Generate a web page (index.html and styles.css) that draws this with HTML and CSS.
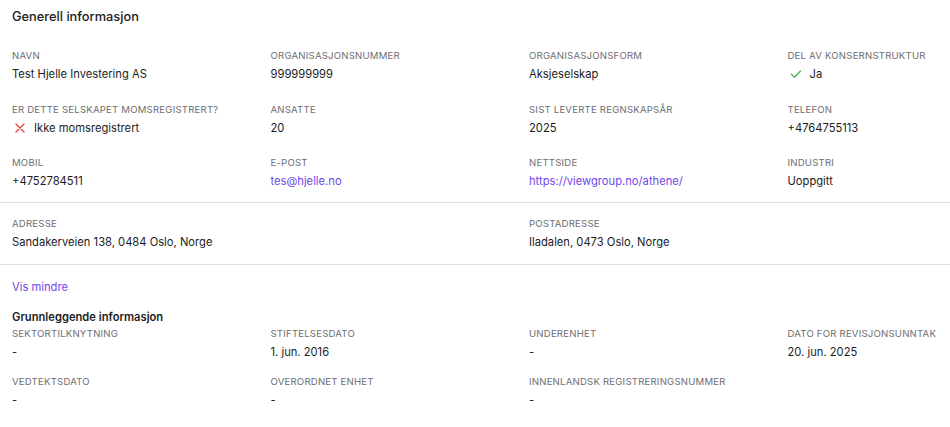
FILE: index.html
```html
<!DOCTYPE html>
<html lang="no">
<head>
<meta charset="utf-8">
<title>Generell informasjon</title>
<link rel="stylesheet" href="styles.css">
</head>
<body>
<div class="page">
  <h2 class="title">Generell informasjon</h2>

  <section class="grid grid-main">
    <div class="field"><div class="label">Navn</div><div class="value">Test Hjelle Investering AS</div></div>
    <div class="field"><div class="label">Organisasjonsnummer</div><div class="value">999999999</div></div>
    <div class="field"><div class="label">Organisasjonsform</div><div class="value">Aksjeselskap</div></div>
    <div class="field"><div class="label">Del av konsernstruktur</div><div class="value icon-value">
      <svg class="icon" viewBox="0 0 12 12" width="12" height="12"><path d="M1.5 6.3 L4.5 9.2 L10.5 3" fill="none" stroke="#4caf50" stroke-width="1.3" stroke-linecap="round" stroke-linejoin="round"/></svg>Ja</div></div>

    <div class="field"><div class="label">Er dette selskapet momsregistrert?</div><div class="value icon-value">
      <svg class="icon" viewBox="0 0 12 12" width="12" height="12"><path d="M2 2 L10 10 M10 2 L2 10" fill="none" stroke="#e5483c" stroke-width="1.4" stroke-linecap="round"/></svg>Ikke momsregistrert</div></div>
    <div class="field"><div class="label">Ansatte</div><div class="value">20</div></div>
    <div class="field"><div class="label">Sist leverte regnskapsår</div><div class="value">2025</div></div>
    <div class="field"><div class="label">Telefon</div><div class="value">+4764755113</div></div>

    <div class="field"><div class="label">Mobil</div><div class="value">+4752784511</div></div>
    <div class="field"><div class="label">E-post</div><div class="value"><a class="link" href="#">tes@hjelle.no</a></div></div>
    <div class="field"><div class="label">Nettside</div><div class="value"><a class="link" href="#">https://viewgroup.no/athene/</a></div></div>
    <div class="field"><div class="label">Industri</div><div class="value">Uoppgitt</div></div>
  </section>

  <section class="grid grid-address">
    <div class="field wide"><div class="label">Adresse</div><div class="value">Sandakerveien 138, 0484 Oslo, Norge</div></div>
    <div class="field wide"><div class="label">Postadresse</div><div class="value">Iladalen, 0473 Oslo, Norge</div></div>
  </section>

  <div class="more"><a class="link" href="#">Vis mindre</a></div>

  <h3 class="subtitle">Grunnleggende informasjon</h3>
  <section class="grid grid-basic">
    <div class="field"><div class="label">Sektortilknytning</div><div class="value">-</div></div>
    <div class="field"><div class="label">Stiftelsesdato</div><div class="value">1. jun. 2016</div></div>
    <div class="field"><div class="label">Underenhet</div><div class="value">-</div></div>
    <div class="field"><div class="label">Dato for revisjonsunntak</div><div class="value">20. jun. 2025</div></div>

    <div class="field"><div class="label">Vedtektsdato</div><div class="value">-</div></div>
    <div class="field"><div class="label">Overordnet enhet</div><div class="value">-</div></div>
    <div class="field"><div class="label">Innenlandsk registreringsnummer</div><div class="value">-</div></div>
  </section>
</div>
</body>
</html>
```

FILE: styles.css
```css
html, body {
  margin: 0;
  padding: 0;
  background: #ffffff;
  overflow: hidden;
}

body {
  font-family: Inter, "Noto Sans", sans-serif;
  color: #1c1c1e;
}

.page {
  width: 1100px;
  padding-top: 7px;
}

.title {
  margin: 0 0 22px 12px;
  font-size: 12.8px;
  line-height: 20px;
  font-weight: 500;
  color: #1c1c1e;
}

.grid {
  display: grid;
  grid-template-columns: repeat(4, 258.5px);
  padding-left: 12px;
}

.grid-main {
  row-gap: 20.5px;
  padding-bottom: 13px;
  border-bottom: 1px solid #dedede;
}

.grid-address {
  padding-top: 14px;
  padding-bottom: 14px;
  border-bottom: 1px solid #dedede;
}

.wide {
  grid-column: span 2;
}

.grid-basic {
  row-gap: 15px;
}

.field {
  display: flex;
  flex-direction: column;
  gap: 3px;
}

.label {
  font-size: 9.6px;
  line-height: 14px;
  text-transform: uppercase;
  letter-spacing: 0.2px;
  color: #6e6e73;
  white-space: nowrap;
}

.value {
  font-size: 11.2px;
  line-height: 16px;
  color: #1c1c1e;
  white-space: nowrap;
}

.icon-value {
  display: flex;
  align-items: center;
  gap: 8px;
}

.icon {
  margin-left: 2px;
  flex: none;
}

.link {
  color: #7048e8;
  text-decoration: none;
}

.more {
  padding: 14px 0 0 12px;
  font-size: 11.2px;
  line-height: 16px;
}

.subtitle {
  margin: 14px 0 2px 12px;
  font-size: 11.2px;
  line-height: 16px;
  font-weight: 600;
  color: #1c1c1e;
}
```
